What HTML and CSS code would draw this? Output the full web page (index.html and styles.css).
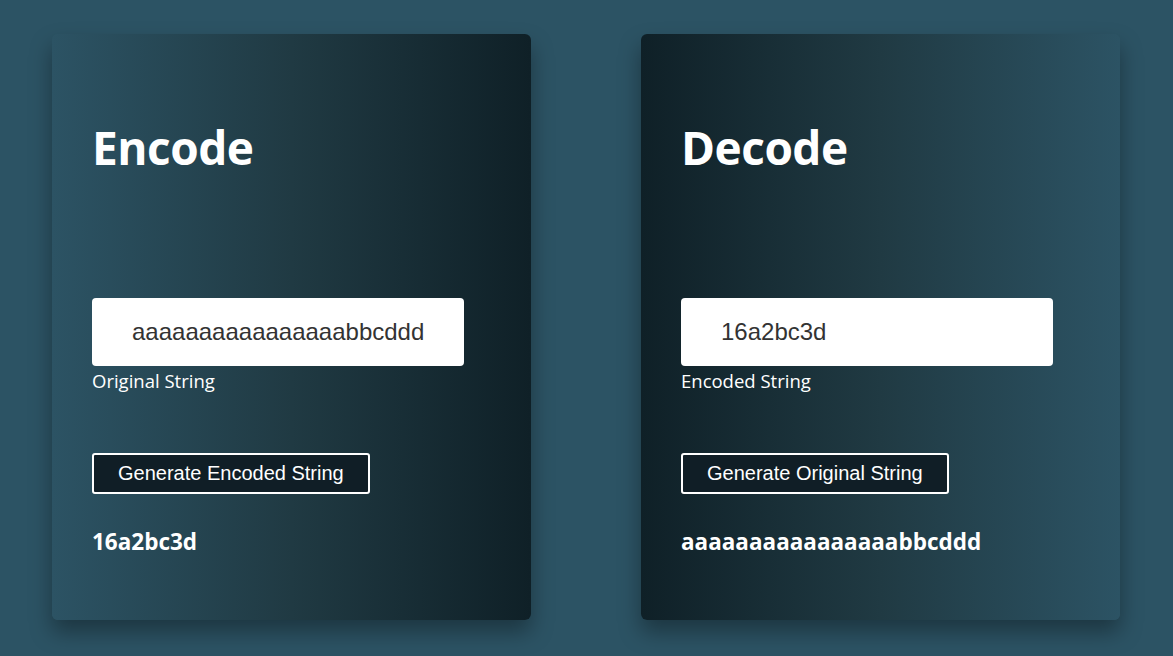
FILE: index.html
```html
<!DOCTYPE html>
<html>
<head>
<meta charset="utf-8">
<link rel="stylesheet" href="styles.css">
</head>
<body>
<main class="page">
  <section class="card card-encode">
    <h1 class="title">Encode</h1>
    <div class="field">
      <input class="input" type="text" value="aaaaaaaaaaaaaaaabbcddd">
      <label class="label">Original String</label>
    </div>
    <button class="btn">Generate Encoded String</button>
    <p class="result">16a2bc3d</p>
  </section>
  <section class="card card-decode">
    <h1 class="title">Decode</h1>
    <div class="field">
      <input class="input" type="text" value="16a2bc3d">
      <label class="label">Encoded String</label>
    </div>
    <button class="btn">Generate Original String</button>
    <p class="result">aaaaaaaaaaaaaaaabbcddd</p>
  </section>
</main>
</body>
</html>
```
FILE: styles.css
```css
* { box-sizing: border-box; }
html, body { margin: 0; height: 100%; }
body {
  background: #2c5364;
  font-family: "Open Sans", "Noto Sans", sans-serif;
  color: #fff;
  overflow: hidden;
}
.page {
  display: flex;
  gap: 110px;
  padding: 34px 53px 0 52px;
}
.card {
  width: 480px;
  height: 586px;
  border-radius: 6px;
  padding: 0 40px;
  display: flex;
  flex-direction: column;
  align-items: flex-start;
  box-shadow: 0 12px 22px rgba(0,0,0,0.35);
}
.card-encode { background: linear-gradient(to right, #2c5364, #203a43, #0f2027); }
.card-decode { background: linear-gradient(to right, #0f2027, #203a43, #2c5364); }
.title {
  margin: 84px 0 0;
  font-size: 46px;
  font-weight: 700;
  line-height: 58px;
  letter-spacing: -0.5px;
}
.field {
  margin-top: 122px;
  display: flex;
  flex-direction: column;
}
.input {
  width: 372px;
  height: 68px;
  border: none;
  border-radius: 4px;
  background: #fff;
  padding: 0 0 0 40px;
  font-family: "Liberation Sans", Arial, sans-serif;
  font-size: 24px;
  color: #333;
  outline: none;
}
.label {
  font-size: 18.5px;
  line-height: 26px;
  margin-top: 2px;
}
.btn {
  margin-top: 59px;
  height: 41px;
  padding: 0 24px;
  background: #101e26;
  border: 2px solid #fff;
  border-radius: 3px;
  color: #fff;
  font-family: "Liberation Sans", Arial, sans-serif;
  font-size: 20px;
}
.result {
  margin: 33px 0 0;
  font-size: 22.5px;
  font-weight: 700;
  line-height: 30px;
}
```
